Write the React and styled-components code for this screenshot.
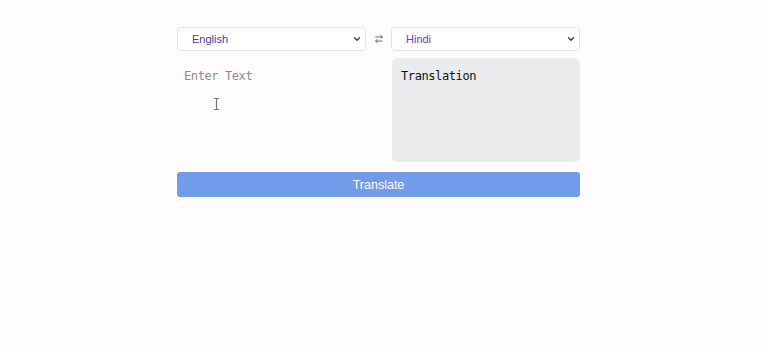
import React, { useState } from 'react'
import styled, { createGlobalStyle } from 'styled-components'
import { ArrowRightLeft, ChevronDown } from 'lucide-react'

const GlobalStyle = createGlobalStyle`
  html, body {
    margin: 0;
    padding: 0;
    background: #fefcfd;
    font-family: "Liberation Sans", Arial, sans-serif;
  }
  #root {
    min-height: 350px;
  }
`

export default function App() {
  const [from, setFrom] = useState('en')
  const [to, setTo] = useState('hi')
  const [text, setText] = useState('')

  return (
    <>
      <GlobalStyle />
      <Page>
        <Translator>
          <SelectWrap>
            <LangSelect value={from} $tone="#4b35b5" onChange={(e) => setFrom(e.target.value)}>
              <option value="en">English</option>
              <option value="hi">Hindi</option>
            </LangSelect>
            <Chevron><ChevronDown size={10} strokeWidth={3} /></Chevron>
          </SelectWrap>
          <Swap><ArrowRightLeft size={10} strokeWidth={2} /></Swap>
          <SelectWrap>
            <LangSelect value={to} $tone="#7a36c0" onChange={(e) => setTo(e.target.value)}>
              <option value="en">English</option>
              <option value="hi">Hindi</option>
            </LangSelect>
            <Chevron><ChevronDown size={10} strokeWidth={3} /></Chevron>
          </SelectWrap>

          <InputBox>
            <TextInput
              placeholder="Enter Text"
              value={text}
              onChange={(e) => setText(e.target.value)}
            />
            <Cursor width="7" height="12" viewBox="0 0 7 12">
              <path d="M1 0.5h5M1 11.5h5M3.5 0.5v11" stroke="#777" strokeWidth="1.2" fill="none" />
            </Cursor>
          </InputBox>
          <span />
          <Output>Translation</Output>

          <TranslateButton>Translate</TranslateButton>
        </Translator>
      </Page>
    </>
  )
}

const Page = styled.div`
  display: flex;
  justify-content: center;
  padding-top: 27px;
`

const Translator = styled.div`
  width: 403px;
  display: grid;
  grid-template-columns: 189px 1fr 189px;
  grid-template-rows: 24px 104px 25px;
  row-gap: 7px;
  margin-right: 9px;
  & > :last-child {
    grid-column: 1 / -1;
    margin-top: 3px;
  }
`

const SelectWrap = styled.div`
  position: relative;
`

const LangSelect = styled.select`
  appearance: none;
  width: 100%;
  height: 24px;
  box-sizing: border-box;
  border: 1px solid #e4e3ea;
  border-radius: 4px;
  background: #ffffff;
  padding: 0 0 0 14px;
  font-family: "Liberation Sans", Arial, sans-serif;
  font-size: 11px;
  color: ${(p) => p.$tone};
  outline: none;
`

const Chevron = styled.span`
  position: absolute;
  right: 4px;
  top: 7px;
  color: #2c2f7a;
  pointer-events: none;
  display: flex;
`

const Swap = styled.div`
  display: flex;
  align-items: center;
  justify-content: center;
  color: #555;
  padding-left: 1px;
`

const InputBox = styled.div`
  position: relative;
`

const TextInput = styled.textarea`
  width: 100%;
  height: 100%;
  box-sizing: border-box;
  border: none;
  background: transparent;
  resize: none;
  outline: none;
  padding: 11px 7px;
  font-family: "DejaVu Sans Mono", monospace;
  font-size: 12px;
  letter-spacing: -0.4px;
  line-height: 14px;
  color: #222;
  &::placeholder {
    color: #8c8c8c;
  }
`

const Cursor = styled.svg`
  position: absolute;
  left: 36px;
  top: 40px;
`

const Output = styled.div`
  background: #e9ebed;
  border-radius: 5px;
  padding: 11px 9px;
  margin-left: 1px;
  font-family: "DejaVu Sans Mono", monospace;
  font-size: 12px;
  letter-spacing: -0.4px;
  line-height: 14px;
  color: #111;
`

const TranslateButton = styled.button`
  height: 25px;
  border: none;
  border-radius: 3px;
  background: #719ce9;
  color: #fff;
  font-family: "Liberation Sans", Arial, sans-serif;
  font-size: 12.5px;
  cursor: pointer;
`
